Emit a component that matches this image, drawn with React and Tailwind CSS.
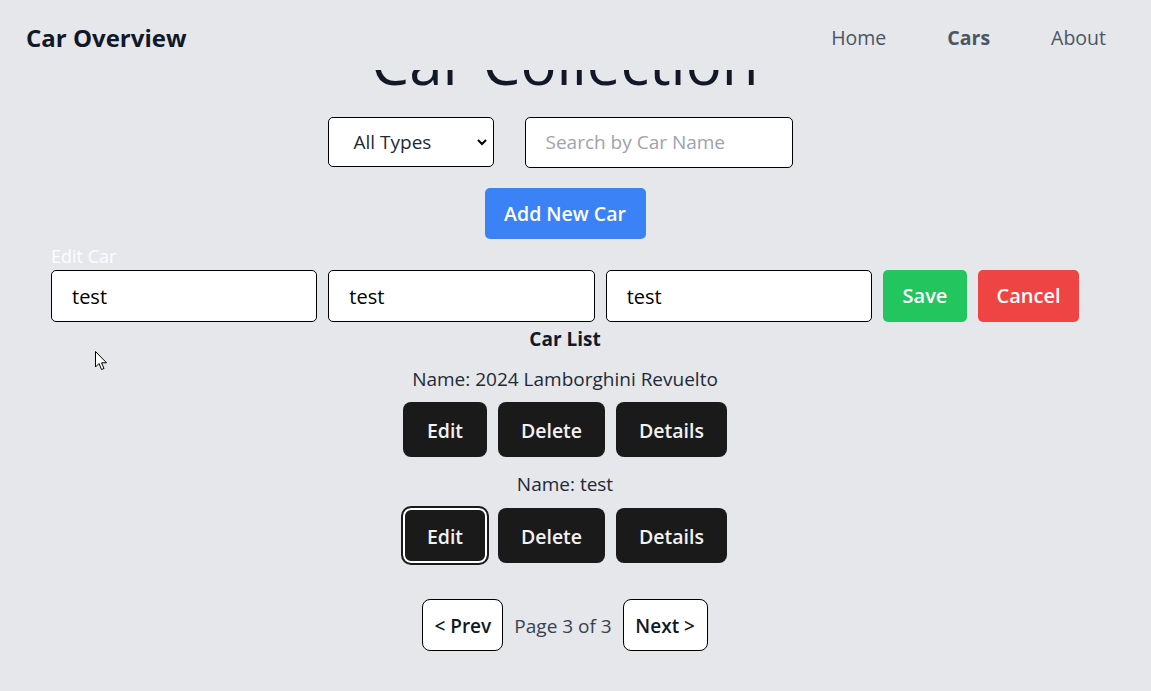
import React from "react";

const font = { fontFamily: '"Open Sans", "Noto Sans", sans-serif' };

function DarkBtn({ children, focused, w }) {
  return (
    <button
      className={
        "h-[55px] rounded-[8px] bg-[#1a1a1a] pt-[2px] text-[19.5px] font-semibold text-[#f2f2f2] " +
        w +
        (focused ? " outline outline-[2px] outline-[#1a1a1a] ring-[2px] ring-inset ring-white" : "")
      }
    >
      {children}
    </button>
  );
}

export default function App() {
  return (
    <div className="relative min-h-[691px] w-full overflow-hidden bg-[#e5e7eb] text-[#1f2937]" style={font}>
      <header className="absolute inset-x-0 top-0 z-10 flex h-[70px] items-start justify-between bg-[#e5e7eb] pl-[26px] pr-[45px] pt-[20px]">
        <div className="text-[24px] font-bold leading-[36px] text-[#111827]">Car Overview</div>
        <nav className="flex items-center gap-[61px] pt-[2px] text-[19.5px] font-medium leading-[32px] text-[#4b5563]">
          <span>Home</span>
          <span className="font-bold">Cars</span>
          <span>About</span>
        </nav>
      </header>

      <main className="ml-[24px] w-[1082px] px-[27px]">
        <h1 className="pt-[26px] text-center text-[60px] font-normal leading-[72px] text-[#111827]">Car Collection</h1>

        <div className="mt-[19px] flex justify-center gap-[31px] pr-[10px]">
          <div className="relative flex h-[50px] w-[166px] items-center rounded-[5px] border border-black bg-white pl-[25px] text-[19px]">
            All Types
            <svg className="absolute right-[5px] top-[19px]" width="12" height="10" viewBox="0 0 12 10">
              <path d="M2 3 L6 7 L10 3" fill="none" stroke="#000" strokeWidth="2" />
            </svg>
          </div>
          <div className="flex h-[51px] w-[268px] items-center rounded-[5px] border border-black bg-white pl-[20px] text-[19px] text-[#9ca3af]">
            Search by Car Name
          </div>
        </div>

        <div className="mt-[20px] flex justify-center">
          <button className="h-[51px] w-[161px] rounded-[5px] bg-[#3b82f6] text-[19.5px] font-semibold text-white">Add New Car</button>
        </div>

        <div className="mt-[6px] text-[18px] leading-[22px] text-white/90">Edit Car</div>

        <div className="mt-[3px] flex gap-[11px]">
          <div className="flex h-[52px] flex-1 items-center rounded-[5px] border border-black bg-white pl-[20px] pt-[2px] text-[20px] text-black">test</div>
          <div className="flex h-[52px] flex-1 items-center rounded-[5px] border border-black bg-white pl-[20px] pt-[2px] text-[20px] text-black">test</div>
          <div className="flex h-[52px] flex-1 items-center rounded-[5px] border border-black bg-white pl-[20px] pt-[2px] text-[20px] text-black">test</div>
          <button className="h-[52px] w-[84px] rounded-[5px] bg-[#22c55e] text-[20px] font-semibold text-white">Save</button>
          <button className="h-[52px] w-[101px] rounded-[5px] bg-[#ef4444] text-[20px] font-semibold text-white">Cancel</button>
        </div>

        <div className="mt-[4px] text-center text-[19px] font-bold leading-[26px] text-[#111827]">Car List</div>

        <div className="mt-[14px] text-center text-[19px] leading-[26px]">Name: 2024 Lamborghini Revuelto</div>
        <div className="mt-[10px] flex justify-center gap-[11px]">
          <DarkBtn w="w-[84px]">Edit</DarkBtn>
          <DarkBtn w="w-[107px]">Delete</DarkBtn>
          <DarkBtn w="w-[111px]">Details</DarkBtn>
        </div>

        <div className="mt-[14px] text-center text-[19px] leading-[26px]">Name: test</div>
        <div className="mt-[11px] flex justify-center gap-[11px]">
          <DarkBtn w="w-[84px]" focused>Edit</DarkBtn>
          <DarkBtn w="w-[107px]">Delete</DarkBtn>
          <DarkBtn w="w-[111px]">Details</DarkBtn>
        </div>

        <div className="mt-[36px] flex items-center justify-center">
          <button className="h-[52px] w-[81px] rounded-[8px] border border-black bg-white pt-[2px] text-[19px] font-semibold text-[#111827]">&lt; Prev</button>
          <span className="mx-[11px] pt-[2px] text-[19px] text-[#374151]">Page 3 of 3</span>
          <button className="h-[52px] w-[85px] rounded-[8px] border border-black bg-white pt-[2px] text-[19px] font-semibold text-[#111827]">Next &gt;</button>
        </div>
      </main>

      <svg className="absolute left-[95px] top-[351px] z-20" width="13" height="20" viewBox="0 0 13 20">
        <path d="M0.5 0.5 L0.5 16 L4 12.5 L6.5 18.5 L9 17.5 L6.5 11.8 L11.5 11.8 Z" fill="#fff" stroke="#000" strokeWidth="1" />
      </svg>
    </div>
  );
}
